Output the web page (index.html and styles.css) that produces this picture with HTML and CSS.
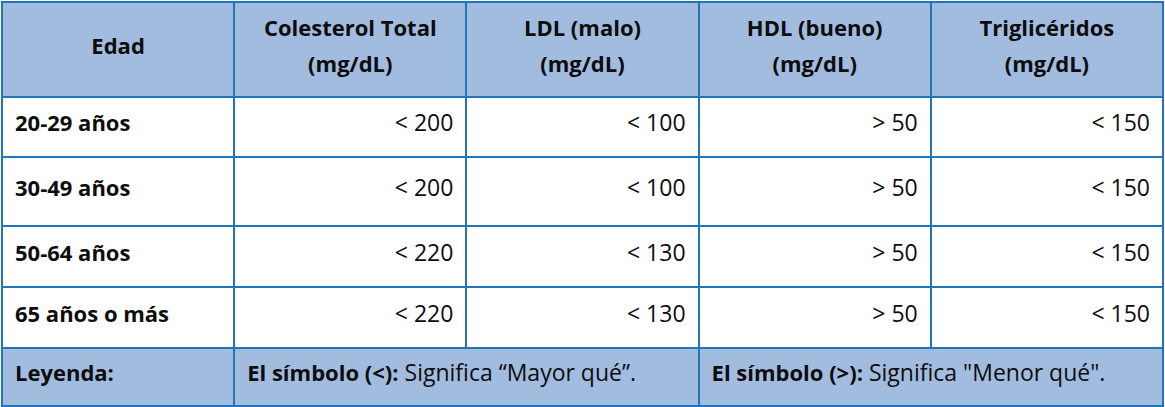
FILE: index.html
```html
<!DOCTYPE html>
<html lang="es">
<head>
<meta charset="utf-8">
<link rel="stylesheet" href="styles.css">
</head>
<body>
<table class="tabla">
  <colgroup>
    <col class="c"><col class="c"><col class="c"><col class="c"><col class="c">
  </colgroup>
  <thead>
    <tr class="head">
      <th>Edad</th>
      <th>Colesterol Total<br>(mg/dL)</th>
      <th>LDL (malo)<br>(mg/dL)</th>
      <th>HDL (bueno)<br>(mg/dL)</th>
      <th>Triglicéridos<br>(mg/dL)</th>
    </tr>
  </thead>
  <tbody>
    <tr class="r1">
      <td class="edad">20-29 años</td><td class="num">&lt; 200</td><td class="num">&lt; 100</td><td class="num">&gt; 50</td><td class="num">&lt; 150</td>
    </tr>
    <tr class="r2">
      <td class="edad">30-49 años</td><td class="num">&lt; 200</td><td class="num">&lt; 100</td><td class="num">&gt; 50</td><td class="num">&lt; 150</td>
    </tr>
    <tr class="r3">
      <td class="edad">50-64 años</td><td class="num">&lt; 220</td><td class="num">&lt; 130</td><td class="num">&gt; 50</td><td class="num">&lt; 150</td>
    </tr>
    <tr class="r4">
      <td class="edad">65 años o más</td><td class="num">&lt; 220</td><td class="num">&lt; 130</td><td class="num">&gt; 50</td><td class="num">&lt; 150</td>
    </tr>
  </tbody>
  <tfoot>
    <tr class="foot">
      <td class="edad">Leyenda:</td>
      <td colspan="2"><b>El símbolo (&lt;):</b> Significa “Mayor qué”.</td>
      <td colspan="2"><b>El símbolo (&gt;):</b> Significa "Menor qué".</td>
    </tr>
  </tfoot>
</table>
</body>
</html>
```
FILE: styles.css
```css
html, body {
  margin: 0;
  padding: 0;
  background: #ffffff;
}
.tabla {
  border-collapse: collapse;
  table-layout: fixed;
  width: 1163px;
  margin: 1px 0 0 1px;
  font-family: "Open Sans", "Noto Sans", sans-serif;
  font-size: 23px;
  color: #0d0d0d;
}
.tabla th, .tabla td {
  border: 2px solid #1f77b9;
  padding: 0 12px 10px;
  vertical-align: middle;
}
.head th {
  background: #a2bcdf;
  font-weight: 700;
  font-size: 22px;
  text-align: center;
  line-height: 36px;
  height: 83px;
}
.tabla td {
  line-height: 28px;
}
.r1 td { height: 48px; }
.r2 td { height: 57px; }
.r3 td { height: 49px; }
.r4 td { height: 49px; }
.foot td {
  height: 46px;
  background: #a2bcdf;
}
.edad {
  font-weight: 700;
  font-size: 22px;
}
.num {
  text-align: right;
}
.foot b {
  font-weight: 700;
  font-size: 22px;
}
```
